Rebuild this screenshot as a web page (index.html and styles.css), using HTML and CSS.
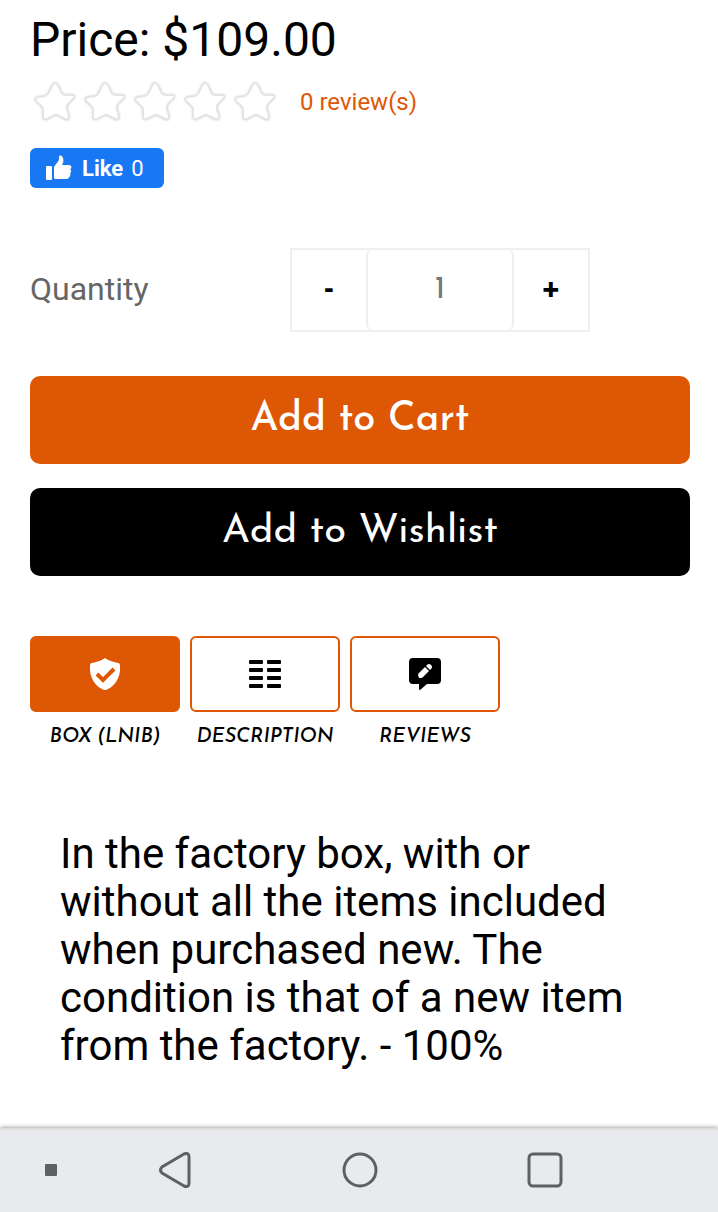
FILE: index.html
```
<!DOCTYPE html>
<html lang="en">
<head>
<meta charset="utf-8">
<meta name="viewport" content="width=device-width, initial-scale=1">
<title>Product</title>
<link rel="stylesheet" href="styles.css">
</head>
<body>
	<svg class="symbols" aria-hidden="true">
		<symbol id="star" viewBox="0 0 50 46">
			<path d="M25 4 Q27 4 29 8 L31 13 Q32 16 36 16 L43 16 Q46 17 43 20 L38 25 Q36 27 37 30 L39 37 Q39 42 35 40 L27 36 Q25 35 23 37 L17 40 Q13 41 13 38 L13 31 Q13 28 11 27 L6 22 Q4 19 8 18 L15 17 Q18 16 19 13 L22 7 Q23 4 25 4 Z"/>
		</symbol>
	</svg>
	<main class="product">
		<div class="price">Price: $109.00</div>
		<div class="rating">
			<div class="stars" role="img" aria-label="0 of 5">
				<svg class="star"><use href="#star"/></svg>
				<svg class="star"><use href="#star"/></svg>
				<svg class="star"><use href="#star"/></svg>
				<svg class="star"><use href="#star"/></svg>
				<svg class="star"><use href="#star"/></svg>
			</div>
			<a class="review-link" href="#reviews">0 review(s)</a>
		</div>
		<button class="like" type="button">
			<svg class="like-icon" viewBox="0 0 26 26" aria-hidden="true">
				<rect x="0" y="11" width="6" height="14" rx="1"/>
				<path d="M8 23 V12 C8 11 9 11 10 9 C13 6 13 5 13 2 C13 0 16 0 17 3 C18 6 17 8 16 10 H23 C26 10 26 14 24 14 C26 16 25 18 24 18 C25 20 24 22 23 22 C23 23 22 24 20 24 H10 Q8 24 8 23 Z"/>
			</svg>
			<strong>Like</strong>
			<span>0</span>
		</button>
		<div class="quantity">
			<label class="quantity-label" for="qty">Quantity</label>
			<div class="stepper">
				<button class="step" type="button">-</button>
				<input class="qty" id="qty" type="text" value="1">
				<button class="step" type="button">+</button>
			</div>
		</div>
		<div class="actions">
			<button class="btn btn-cart" type="button">Add to Cart</button>
			<button class="btn btn-wish" type="button">Add to Wishlist</button>
		</div>
		<div class="tabs">
			<a class="tab active" href="#box">
				<span class="tab-icon">
					<svg viewBox="0 0 32 32" aria-hidden="true">
						<path fill="#fff" d="M16 0 C20 3 25 4 29 5 Q31 5 31 8 C32 20 25 29 17 32 Q16 32 15 32 C7 29 0 20 1 8 Q1 5 3 5 C7 4 12 3 16 0 Z"/>
						<path fill="none" stroke="#de5705" stroke-width="4" d="M8 16 L14 22 L25 11"/>
					</svg>
				</span>
				<span class="tab-label">BOX (LNIB)</span>
			</a>
			<a class="tab" href="#description">
				<span class="tab-icon">
					<svg viewBox="0 0 32 32" aria-hidden="true">
						<rect x="0" y="2" width="14" height="4" rx="1"/>
						<rect x="18" y="2" width="14" height="4" rx="1"/>
						<rect x="0" y="10" width="14" height="4" rx="1"/>
						<rect x="18" y="10" width="14" height="4" rx="1"/>
						<rect x="0" y="18" width="14" height="4" rx="1"/>
						<rect x="18" y="18" width="14" height="4" rx="1"/>
						<rect x="0" y="26" width="14" height="4" rx="1"/>
						<rect x="18" y="26" width="14" height="4" rx="1"/>
					</svg>
				</span>
				<span class="tab-label">DESCRIPTION</span>
			</a>
			<a class="tab" href="#reviews">
				<span class="tab-icon">
					<svg viewBox="0 0 32 32" aria-hidden="true">
						<path d="M4 0 H28 Q32 0 32 4 V22 Q32 26 28 26 H18 L11 32 Q10 32 10 31 V26 H4 Q0 26 0 22 V4 Q0 0 4 0 Z"/>
						<path fill="#fff" d="M10 20 L9 17 Q9 16 10 15 L16 9 L20 13 L14 19 Q13 20 12 20 Z"/>
						<path fill="#fff" d="M17 8 L18 7 Q20 5 22 7 Q24 9 22 11 L21 12 Z"/>
					</svg>
				</span>
				<span class="tab-label">REVIEWS</span>
			</a>
		</div>
		<p class="text" id="box">In the factory box, with or without all the items included when purchased new. The condition is that of a new item from the factory. - 100%</p>
	</main>
	<nav class="navbar">
		<button class="nav-btn nav-dot" type="button" aria-label="Menu">
			<svg width="12" height="12"><rect width="12" height="12" rx="1"/></svg>
		</button>
		<button class="nav-btn" type="button" aria-label="Back">
			<svg class="outline" width="36" height="36"><path d="M27 2 L5 15 Q2 18 5 21 L27 34 Q32 36 32 31 V5 Q32 0 27 2 Z"/></svg>
		</button>
		<button class="nav-btn" type="button" aria-label="Home">
			<svg class="outline" width="36" height="36"><circle cx="18" cy="18" r="16"/></svg>
		</button>
		<button class="nav-btn" type="button" aria-label="Recent">
			<svg class="outline" width="36" height="36"><rect x="2" y="2" width="32" height="32" rx="4"/></svg>
		</button>
	</nav>
</body>
</html>
```
FILE: styles.css
```
* {
	box-sizing: border-box;
}
body {
	margin: 0;
	min-height: 100vh;
	display: flex;
	flex-direction: column;
	background: #fff;
	color: #000;
	font-family: Roboto, sans-serif;
}
button {
	font-family: inherit;
	padding: 0;
	border: 0;
	cursor: pointer;
}
a {
	text-decoration: none;
}
.symbols {
	display: none;
}
.product {
	flex: 1;
	padding: 12px 28px 48px 30px;
}
.price {
	font-size: 48px;
	line-height: 56px;
}
.rating {
	display: flex;
	align-items: center;
	gap: 20px;
	height: 68px;
}
.stars {
	display: flex;
}
.star {
	width: 50px;
	height: 46px;
	fill: #fff;
	stroke: #e4e4e4;
	stroke-width: 2px;
	filter: drop-shadow(0 0 1px #ddd);
}
.review-link {
	color: #de5705;
	font-size: 24px;
}
.like {
	display: flex;
	align-items: center;
	gap: 8px;
	width: 134px;
	height: 40px;
	margin-top: 12px;
	padding-left: 16px;
	border-radius: 6px;
	background: #1877f2;
	color: #fff;
	font-size: 22px;
}
.like-icon {
	width: 26px;
	height: 26px;
	margin-right: 2px;
	fill: #fff;
}
.quantity {
	display: flex;
	align-items: center;
	margin-top: 60px;
}
.quantity-label {
	width: 260px;
	padding-bottom: 2px;
	color: #666;
	font-size: 32px;
}
.stepper {
	display: flex;
	width: 300px;
	height: 84px;
	border: 2px solid #eee;
}
.step {
	width: 74px;
	padding-bottom: 2px;
	background: #fff;
	color: #000;
	font-family: "Josefin Sans", Lato, sans-serif;
	font-size: 40px;
	font-weight: 500;
}
.qty {
	flex: 1;
	min-width: 0;
	border: solid #eee;
	border-width: 0 2px;
	border-radius: 6px;
	color: #777;
	font-family: "Josefin Sans", Lato, sans-serif;
	font-size: 32px;
	text-align: center;
}
.actions {
	display: grid;
	gap: 24px;
	margin-top: 44px;
}
.btn {
	height: 88px;
	border-radius: 10px;
	color: #fff;
	font-family: "Josefin Sans", Lato, sans-serif;
	font-size: 40px;
}
.btn-cart {
	background: #de5705;
	font-weight: 500;
}
.btn-wish {
	background: #000;
	font-weight: 400;
}
.tabs {
	display: flex;
	gap: 10px;
	margin-top: 60px;
}
.tab {
	width: 150px;
	color: #000;
	text-align: center;
}
.tab-icon {
	display: flex;
	align-items: center;
	justify-content: center;
	height: 76px;
	border: 2px solid #de5705;
	border-radius: 6px;
}
.tab-icon svg {
	width: 32px;
	height: 32px;
}
.active .tab-icon {
	background: #de5705;
}
.tab-label {
	display: block;
	margin-top: 12px;
	font-family: "Josefin Sans", Lato, sans-serif;
	font-size: 20px;
	font-style: italic;
	font-weight: 500;
	line-height: 26px;
}
.text {
	margin: 80px 0 0;
	padding: 0 30px;
	font-size: 42px;
	line-height: 48px;
}
.navbar {
	display: grid;
	grid-template-columns: 82px repeat(3, 1fr) 80px;
	align-items: start;
	height: 84px;
	border-top: 2px solid #dddddc;
	background: #e9eaee;
	box-shadow: 0 -1px 4px #aaa;
}
.nav-btn {
	display: flex;
	align-items: center;
	justify-content: center;
	height: 80px;
	background: none;
	fill: #5f6062;
}
.nav-dot {
	justify-content: flex-end;
	padding-right: 25px;
}
.outline {
	fill: none;
	stroke: #5f6062;
	stroke-width: 3px;
}
```
